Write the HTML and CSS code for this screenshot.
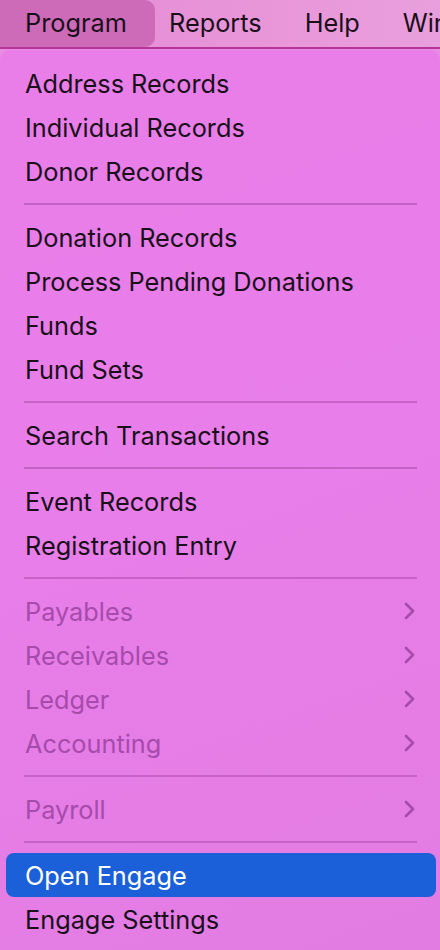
FILE: index.html
```html
<!DOCTYPE html>
<html>
<head>
<meta charset="utf-8">
<link rel="stylesheet" href="styles.css">
</head>
<body>
<div class="screen">
  <div class="menubar">
    <div class="mb-item active">Program</div>
    <div class="mb-item first">Reports</div>
    <div class="mb-item">Help</div>
    <div class="mb-item">Window</div>
  </div>
  <div class="menu">
    <div class="item">Address Records</div>
    <div class="item">Individual Records</div>
    <div class="item">Donor Records</div>
    <div class="sep"></div>
    <div class="item">Donation Records</div>
    <div class="item">Process Pending Donations</div>
    <div class="item">Funds</div>
    <div class="item">Fund Sets</div>
    <div class="sep"></div>
    <div class="item">Search Transactions</div>
    <div class="sep"></div>
    <div class="item">Event Records</div>
    <div class="item">Registration Entry</div>
    <div class="sep"></div>
    <div class="item disabled"><span>Payables</span><svg class="chev" viewBox="0 0 12 18"><path d="M2 2 L9 9 L2 16"/></svg></div>
    <div class="item disabled"><span>Receivables</span><svg class="chev" viewBox="0 0 12 18"><path d="M2 2 L9 9 L2 16"/></svg></div>
    <div class="item disabled"><span>Ledger</span><svg class="chev" viewBox="0 0 12 18"><path d="M2 2 L9 9 L2 16"/></svg></div>
    <div class="item disabled"><span>Accounting</span><svg class="chev" viewBox="0 0 12 18"><path d="M2 2 L9 9 L2 16"/></svg></div>
    <div class="sep"></div>
    <div class="item disabled"><span>Payroll</span><svg class="chev" viewBox="0 0 12 18"><path d="M2 2 L9 9 L2 16"/></svg></div>
    <div class="sep"></div>
    <div class="item selected">Open Engage</div>
    <div class="item">Engage Settings</div>
  </div>
</div>
</body>
</html>
```
FILE: styles.css
```css
html, body {
  margin: 0;
  padding: 0;
  width: 440px;
  height: 950px;
  overflow: hidden;
  background: #e78ee0;
}
.screen {
  width: 440px;
  height: 950px;
  display: flex;
  flex-direction: column;
  font-family: "Inter", "Liberation Sans", sans-serif;
  color: #1a101a;
}
.menubar {
  height: 47px;
  display: flex;
  align-items: stretch;
  background: linear-gradient(90deg, #e28ad6 0%, #e996d9 60%, #e99fdd 100%);
  border-bottom: 2px solid #b8349a;
  white-space: nowrap;
  overflow: hidden;
  flex-shrink: 0;
}
.mb-item {
  font-size: 25.3px;
  padding: 0 21px 0 22px;
  display: flex;
  align-items: center;
  padding-bottom: 2px;
  flex-shrink: 0;
}
.mb-item.first { padding-left: 14px; }
.mb-item.active {
  background: #cd6bb9;
  border-radius: 0 10px 10px 0;
  width: 155px;
  padding-left: 25px;
  box-sizing: border-box;
}
.menu {
  margin-top: 1px;
  flex: 1;
  background: linear-gradient(160deg, #e97ee9 0%, #e87ee9 50%, #e27ce2 100%);
  border-radius: 10px 10px 0 0;
  padding: 11px 4px 0 6px;
  display: flex;
  flex-direction: column;
}
.item {
  height: 44px;
  display: flex;
  align-items: center;
  justify-content: space-between;
  padding: 0 20px 0 19px;
  font-size: 25.3px;
  border-radius: 8px;
  white-space: nowrap;
}
.item.disabled {
  color: #a64aab;
}
.item.selected {
  background: #1b5fd9;
  color: #ffffff;
}
.chev {
  width: 12px;
  height: 18px;
  fill: none;
  stroke: #a64aab;
  stroke-width: 2.6;
  stroke-linecap: round;
  stroke-linejoin: round;
}
.sep {
  height: 22px;
  display: flex;
  align-items: center;
  padding: 0 19px 0 18px;
}
.sep::before {
  content: "";
  display: block;
  width: 100%;
  height: 2px;
  background: #c661c7;
}
```
